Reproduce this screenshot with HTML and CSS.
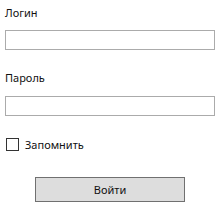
FILE: index.html
```html
<!DOCTYPE html>
<html lang="ru">
<head>
    <meta charset="UTF-8">
    <title>Вход</title>
    <link rel="stylesheet" href="styles.css">
</head>
<body>
    <div class="login-form">
        <label class="field-label" for="login">Логин</label>
        <input class="field-input" id="login" type="text">

        <label class="field-label password-label" for="password">Пароль</label>
        <input class="field-input" id="password" type="password">

        <label class="remember">
            <span class="check-box"></span>
            <span>Запомнить</span>
        </label>

        <div class="actions">
            <button class="submit">Войти</button>
        </div>
    </div>
</body>
</html>
```

FILE: styles.css
```css
body {
    margin: 0;
    background-color: #fff;
    font-family: "Noto Sans", "Open Sans", sans-serif;
    font-size: 11px;
    color: #111;
}

.login-form {
    display: flex;
    flex-direction: column;
    padding: 5px 5px 0 5px;
}

.field-label {
    line-height: 16px;
    height: 16px;
    margin-bottom: 9px;
    padding-left: 0;
}

.password-label {
    margin-top: 20px;
    margin-bottom: 10px;
}

.field-input {
    box-sizing: border-box;
    height: 20px;
    width: 210px;
    margin: 0;
    border: 1px solid #ababab;
    background-color: #fff;
    outline: none;
}

.remember {
    display: flex;
    align-items: center;
    gap: 6px;
    margin-top: 22px;
    padding-left: 1px;
    height: 13px;
    line-height: 13px;
}

.check-box {
    box-sizing: border-box;
    width: 13px;
    height: 13px;
    border: 1px solid #333;
    background-color: #fff;
}

.actions {
    display: flex;
    padding-left: 30px;
    margin-top: 26px;
}

.submit {
    box-sizing: border-box;
    width: 150px;
    height: 25px;
    border: 1px solid #707070;
    background-color: #dddddd;
    font-family: "Noto Sans", "Open Sans", sans-serif;
    font-size: 11px;
    color: #111;
    padding: 0;
}
```
